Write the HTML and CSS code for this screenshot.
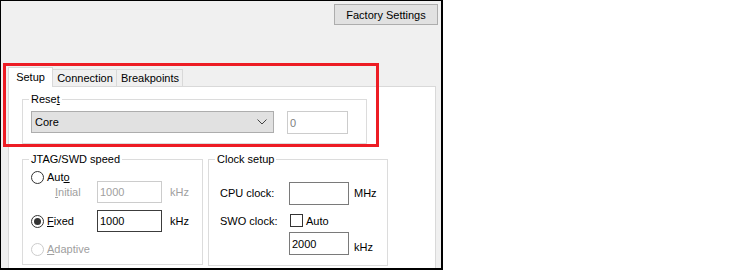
FILE: index.html
```html
<!DOCTYPE html>
<html lang="en">
<head>
  <meta charset="UTF-8" />
  <title>Target settings</title>
  <link rel="stylesheet" href="styles.css">
</head>
<body>
  <div class="window">
    <div class="top-bar">
      <button class="btn">Factory Settings</button>
    </div>

    <div class="tabs">
      <div class="tab active tab-setup">Setup</div>
      <div class="tab tab-conn">Connection</div>
      <div class="tab tab-bp">Breakpoints</div>
    </div>

    <div class="panel">
      <div class="group reset">
        <div class="legend">Rese<u>t</u></div>
        <div class="reset-row">
          <div class="combo">
            <span>Core</span>
            <svg class="chevron" width="10" height="6" viewBox="0 0 10 6">
              <polyline points="0.5,0.5 5,5 9.5,0.5" fill="none" stroke="#444" stroke-width="1"/>
            </svg>
          </div>
          <div class="edit edit-reset">0</div>
        </div>
      </div>

      <div class="groups">
        <div class="group jtag">
          <div class="legend">JTAG/SWD speed</div>
          <div class="row row-auto">
            <span class="radio"></span>
            <span>Aut<u>o</u></span>
          </div>
          <div class="row row-initial">
            <span class="initial-label muted"><u>I</u>nitial</span>
            <div class="edit edit-speed muted">1000</div>
            <span class="unit muted">kHz</span>
          </div>
          <div class="row row-fixed">
            <span class="radio-label"><span class="radio checked"></span><span><u>F</u>ixed</span></span>
            <div class="edit edit-speed edit-dark">1000</div>
            <span class="unit">kHz</span>
          </div>
          <div class="row row-adaptive">
            <span class="radio disabled"></span>
            <span class="muted"><u>A</u>daptive</span>
          </div>
        </div>

        <div class="group clock">
          <div class="legend">Clock setup</div>
          <div class="row row-cpu">
            <span class="clock-label">CPU clock:</span>
            <div class="edit edit-clock"></div>
            <span class="unit-clock">MHz</span>
          </div>
          <div class="row row-swo">
            <span class="clock-label swo-label">SWO clock:</span>
            <span class="check"></span>
            <span>Auto</span>
          </div>
          <div class="row row-swo-val">
            <div class="edit edit-clock edit-swo">2000</div>
            <span class="unit-clock unit-low">kHz</span>
          </div>
        </div>
      </div>
    </div>

    <div class="highlight"></div>
  </div>
</body>
</html>
```

FILE: styles.css
```css
html, body {
  margin: 0;
  padding: 0;
  background-color: white;
  font-family: "Liberation Sans", Arial, sans-serif;
  font-size: 11px;
  color: #000;
}
.window {
  position: relative;
  width: 440px;
  height: 267px;
  border-style: solid;
  border-color: #000;
  border-width: 1px 2px 2px 1px;
  background-color: #f0f0f0;
  overflow: hidden;
}
.top-bar {
  display: flex;
  justify-content: flex-end;
  padding: 3px 3px 0 0;
}
.btn {
  width: 104px;
  height: 21px;
  padding: 0;
  border: 1px solid #adadad;
  background-color: #e1e1e1;
  font-family: inherit;
  font-size: 11px;
  color: #000;
}
.tabs {
  display: flex;
  align-items: flex-end;
  height: 19px;
  margin-top: 42px;
  padding-left: 7px;
}
.tab {
  box-sizing: border-box;
  height: 17px;
  border: 1px solid #d9d9d9;
  border-bottom: none;
  background-color: #f0f0f0;
  display: flex;
  align-items: center;
  justify-content: center;
  margin-left: -1px;
}
.tab.active {
  position: relative;
  z-index: 1;
  height: 20px;
  margin-bottom: -1px;
  margin-left: 0;
  background-color: white;
  padding-bottom: 2px;
}
.tab-setup { width: 45px; }
.tab-conn { width: 65px; padding-left: 1px; }
.tab-bp { width: 67px; padding-left: 1px; }
.panel {
  box-sizing: border-box;
  width: 428px;
  height: 200px;
  margin-left: 7px;
  border: 1px solid #d9d9d9;
  background-color: white;
}
.group {
  box-sizing: border-box;
  border: 1px solid #dcdcdc;
}
.legend {
  width: fit-content;
  height: 14px;
  line-height: 14px;
  margin: -8px 0 0 6px;
  padding: 0 2px;
  background-color: white;
}
.reset {
  width: 345px;
  height: 45px;
  margin: 12px 0 0 13px;
}
.reset-row {
  display: flex;
  gap: 13px;
  margin-top: 5px;
  padding-left: 8px;
}
.combo {
  box-sizing: border-box;
  width: 243px;
  height: 22px;
  border: 1px solid #adadad;
  background-color: #e1e1e1;
  display: flex;
  align-items: center;
  justify-content: space-between;
  padding: 0 6px 0 3px;
}
.edit {
  box-sizing: border-box;
  height: 22px;
  border: 1px solid #7a7a7a;
  background-color: white;
  display: flex;
  align-items: center;
  padding-left: 2px;
}
.edit-reset {
  width: 61px;
  height: 23px;
  border-color: #cccccc;
  color: #808080;
}
.groups {
  display: flex;
  gap: 5px;
  margin: 15px 0 0 13px;
}
.jtag {
  width: 181px;
  height: 106px;
}
.clock {
  width: 180px;
  height: 107px;
}
.row {
  display: flex;
  align-items: center;
}
.row-auto {
  height: 14px;
  margin-top: 4px;
  padding-left: 8px;
}
.row-initial {
  height: 22px;
  margin-top: -3px;
  padding-left: 32px;
}
.row-fixed {
  height: 22px;
  margin-top: 7px;
  padding-left: 8px;
}
.row-adaptive {
  height: 14px;
  margin-top: 10px;
  padding-left: 8px;
}
.initial-label {
  width: 42px;
}
.radio-label {
  display: flex;
  align-items: center;
  width: 66px;
}
.radio {
  box-sizing: border-box;
  width: 13px;
  height: 13px;
  border: 1px solid #333;
  border-radius: 50%;
  background-color: white;
  margin-right: 3px;
  display: flex;
  align-items: center;
  justify-content: center;
}
.radio.checked::after {
  content: "";
  width: 7px;
  height: 7px;
  border-radius: 50%;
  background-color: #333;
}
.radio.disabled {
  border-color: #cccccc;
}
.check {
  box-sizing: border-box;
  width: 13px;
  height: 13px;
  border: 1px solid #333;
  background-color: white;
  margin-right: 3px;
}
.edit-speed {
  width: 65px;
}
.edit-speed.muted {
  border-color: #cccccc;
}
.edit-dark {
  border-color: #3c3c3c;
}
.unit {
  margin-left: 8px;
}
.muted {
  color: #a0a0a0;
}
.row-cpu {
  height: 22px;
  margin-top: 16px;
  padding-left: 11px;
}
.clock-label {
  width: 69px;
}
.swo-label {
  width: 70px;
}
.edit-clock {
  width: 60px;
  height: 23px;
}
.unit-clock {
  margin-left: 5px;
}
.unit-low {
  padding-top: 6px;
}
.row-swo {
  height: 13px;
  margin-top: 10px;
  padding-left: 11px;
}
.row-swo-val {
  height: 23px;
  margin-top: 5px;
  padding-left: 80px;
}
.highlight {
  position: absolute;
  left: 2px;
  top: 62px;
  width: 376px;
  height: 84px;
  box-sizing: border-box;
  border: 3px solid #ed1c24;
}
```
